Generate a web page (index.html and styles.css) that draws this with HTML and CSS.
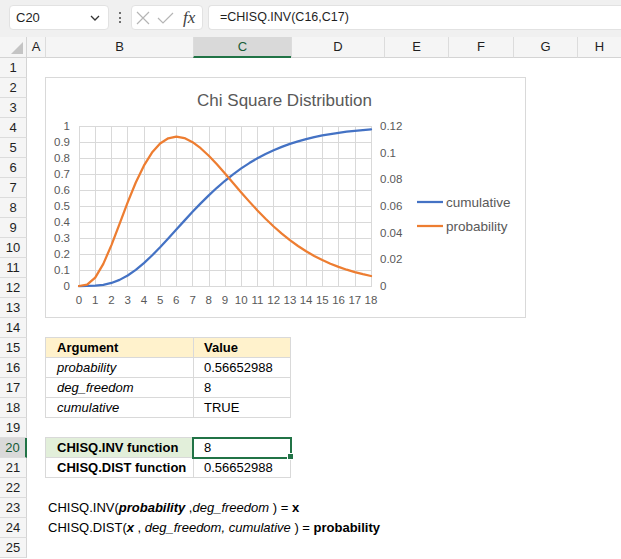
FILE: index.html
```html
<!DOCTYPE html>
<html>
<head>
<meta charset="utf-8">
<link rel="stylesheet" href="styles.css">
</head>
<body>
<div class="toolbar">
  <div class="namebox"><span>C20</span>
    <svg class="chev" width="10" height="6" viewBox="0 0 10 6"><polyline points="1,1 5,5 9,1" fill="none" stroke="#333" stroke-width="1.3"/></svg>
  </div>
  <div class="dots"><i></i><i></i><i></i></div>
  <div class="fxbox">
    <svg width="46" height="23" viewBox="0 0 46 23">
      <path d="M5 6 L17 18 M17 6 L5 18" stroke="#b5b5b5" stroke-width="1.2" fill="none"/>
      <polyline points="26,12 31,17 41,7" stroke="#b5b5b5" stroke-width="1.2" fill="none"/>
    </svg>
    <span class="fx">fx</span>
  </div>
  <div class="formula">=CHISQ.INV(C16,C17)</div>
</div>

<div class="sheet">
  <div class="corner"><span class="tri"></span></div>
  <div class="ch">A</div>
  <div class="ch sep">B</div>
  <div class="ch sep sel">C</div>
  <div class="ch sep">D</div>
  <div class="ch sep">E</div>
  <div class="ch sep">F</div>
  <div class="ch sep">G</div>
  <div class="ch sep">H</div>

  <div class="rh">1</div><div class="row"></div>
  <div class="rh">2</div><div class="row"></div>
  <div class="rh">3</div><div class="row"></div>
  <div class="rh">4</div><div class="row"></div>
  <div class="rh">5</div><div class="row"></div>
  <div class="rh">6</div><div class="row"></div>
  <div class="rh">7</div><div class="row"></div>
  <div class="rh">8</div><div class="row"></div>
  <div class="rh">9</div><div class="row"></div>
  <div class="rh">10</div><div class="row"></div>
  <div class="rh">11</div><div class="row"></div>
  <div class="rh">12</div><div class="row"></div>
  <div class="rh">13</div><div class="row"></div>
  <div class="rh">14</div><div class="row"></div>

  <div class="rh">15</div><div class="a"></div>
  <div class="tc b top hdr bold">Argument</div><div class="tc c top hdr bold">Value</div><div class="rest"></div>
  <div class="rh">16</div><div class="a"></div>
  <div class="tc b it">probability</div><div class="tc c">0.56652988</div><div class="rest"></div>
  <div class="rh">17</div><div class="a"></div>
  <div class="tc b it">deg_freedom</div><div class="tc c">8</div><div class="rest"></div>
  <div class="rh">18</div><div class="a"></div>
  <div class="tc b it">cumulative</div><div class="tc c">TRUE</div><div class="rest"></div>
  <div class="rh">19</div><div class="row"></div>

  <div class="rh sel">20</div><div class="a"></div>
  <div class="tc b top green bold">CHISQ.INV function</div><div class="tc c top active">8</div><div class="rest"></div>
  <div class="rh">21</div><div class="a"></div>
  <div class="tc b bold">CHISQ.DIST function</div><div class="tc c">0.56652988</div><div class="rest"></div>
  <div class="rh">22</div><div class="row"></div>

  <div class="rh">23</div><div class="a"></div>
  <div class="txt">CHISQ.INV(<b><i>probability</i></b> ,<i>deg_freedom</i> ) = <b>x</b></div>
  <div class="rh">24</div><div class="a"></div>
  <div class="txt">CHISQ.DIST(<b><i>x</i></b> , <i>deg_freedom, cumulative</i> ) = <b>probability</b></div>
  <div class="rh">25</div><div class="row"></div>

  <div class="chart">
    <svg width="481" height="241" viewBox="0 0 481 241" font-family="Liberation Sans, Arial, sans-serif">
      <rect x="0.5" y="0.5" width="480" height="240" fill="#fff" stroke="#d9d9d9"/>
      <text x="239.5" y="29" text-anchor="middle" font-size="17" fill="#595959">Chi Square Distribution</text>
      <g stroke="#d9d9d9" stroke-width="1" shape-rendering="crispEdges" fill="none">
        <path d="M34 49.5H326M34 65.5H326M34 81.5H326M34 97.5H326M34 113.5H326M34 129.5H326M34 145.5H326M34 161.5H326M34 177.5H326M34 193.5H326M34 209.5H326"/>
        <path d="M34.5 49V210M50.5 49V210M66.5 49V210M82.5 49V210M99.5 49V210M115.5 49V210M131.5 49V210M147.5 49V210M164.5 49V210M180.5 49V210M196.5 49V210M212.5 49V210M228.5 49V210M245.5 49V210M261.5 49V210M277.5 49V210M293.5 49V210M310.5 49V210M326.5 49V210"/>
      </g>
      <g font-size="11.5" fill="#595959" text-anchor="end">
        <text x="25" y="53">1</text>
        <text x="25" y="69">0.9</text>
        <text x="25" y="85">0.8</text>
        <text x="25" y="101">0.7</text>
        <text x="25" y="117">0.6</text>
        <text x="25" y="133">0.5</text>
        <text x="25" y="149">0.4</text>
        <text x="25" y="165">0.3</text>
        <text x="25" y="181">0.2</text>
        <text x="25" y="197">0.1</text>
        <text x="25" y="213">0</text>
      </g>
      <g font-size="11.5" fill="#595959">
        <text x="335" y="53">0.12</text>
        <text x="335" y="79.7">0.1</text>
        <text x="335" y="106.3">0.08</text>
        <text x="335" y="133">0.06</text>
        <text x="335" y="159.7">0.04</text>
        <text x="335" y="186.3">0.02</text>
        <text x="335" y="213">0</text>
      </g>
      <g font-size="11.5" fill="#595959" text-anchor="middle">
        <text x="34" y="227">0</text>
        <text x="50.2" y="227">1</text>
        <text x="66.4" y="227">2</text>
        <text x="82.7" y="227">3</text>
        <text x="98.9" y="227">4</text>
        <text x="115.1" y="227">5</text>
        <text x="131.3" y="227">6</text>
        <text x="147.6" y="227">7</text>
        <text x="163.8" y="227">8</text>
        <text x="180" y="227">9</text>
        <text x="196.2" y="227">10</text>
        <text x="212.4" y="227">11</text>
        <text x="228.7" y="227">12</text>
        <text x="244.9" y="227">13</text>
        <text x="261.1" y="227">14</text>
        <text x="277.3" y="227">15</text>
        <text x="293.6" y="227">16</text>
        <text x="309.8" y="227">17</text>
        <text x="326" y="227">18</text>
      </g>
      <polyline fill="none" stroke="#4472c4" stroke-width="2.25" stroke-linejoin="round" stroke-linecap="round" points="34,209 42.11,208.98 50.22,208.72 58.33,207.84 66.44,205.96 74.56,202.88 82.67,198.5 90.78,192.87 98.89,186.14 107,178.51 115.11,170.21 123.22,161.49 131.33,152.56 139.44,143.62 147.56,134.86 155.67,126.4 163.78,118.36 171.89,110.79 180,103.77 188.11,97.3 196.22,91.4 204.33,86.07 212.44,81.27 220.56,76.99 228.67,73.19 236.78,69.84 244.89,66.9 253,64.32 261.11,62.08 269.22,60.14 277.33,58.46 285.44,57.02 293.56,55.78 301.67,54.72 309.78,53.82 317.89,53.05 326,52.4"/>
      <polyline fill="none" stroke="#ed7d31" stroke-width="2.25" stroke-linejoin="round" stroke-linecap="round" points="34,209 42.11,207.65 50.22,200.58 58.33,186.86 66.44,168.12 74.56,146.82 82.67,125.33 90.78,105.52 98.89,88.7 107,75.61 115.11,66.49 123.22,61.28 131.33,59.65 139.44,61.11 147.56,65.14 155.67,71.2 163.78,78.75 171.89,87.33 180,96.52 188.11,105.98 196.22,115.42 204.33,124.63 212.44,133.45 220.56,141.77 228.67,149.51 236.78,156.63 244.89,163.13 253,168.99 261.11,174.25 269.22,178.93 277.33,183.07 285.44,186.72 293.56,189.92 301.67,192.7 309.78,195.12 317.89,197.21 326,199"/>
      <line x1="372" y1="125" x2="398" y2="125" stroke="#4472c4" stroke-width="2.25"/>
      <line x1="372" y1="149" x2="398" y2="149" stroke="#ed7d31" stroke-width="2.25"/>
      <text x="401" y="129.5" font-size="13.5" fill="#595959">cumulative</text>
      <text x="401" y="153.5" font-size="13.5" fill="#595959">probability</text>
    </svg>
  </div>
</div>
</body>
</html>
```

FILE: styles.css
```css
html, body {
  margin: 0;
  padding: 0;
}
body {
  width: 621px;
  height: 559px;
  overflow: hidden;
  background: #ffffff;
  font-family: "Liberation Sans", Arial, sans-serif;
  color: #000;
}

/* formula bar */
.toolbar {
  display: flex;
  align-items: flex-start;
  height: 37px;
  box-sizing: border-box;
  padding: 5px 0 0 9px;
  background: #f0f0f0;
}
.namebox {
  width: 100px;
  height: 25px;
  box-sizing: border-box;
  background: #fff;
  border: 1px solid #e2e2e2;
  border-radius: 4px;
  display: flex;
  align-items: center;
  justify-content: space-between;
  padding: 0 8px 0 6px;
  font-size: 13px;
  color: #1f1f1f;
}
.chev { display: block; }
.dots {
  width: 22px;
  height: 25px;
  display: flex;
  flex-direction: column;
  align-items: center;
  justify-content: center;
  gap: 2.5px;
}
.dots i {
  display: block;
  width: 2px;
  height: 2px;
  background: #444;
  border-radius: 50%;
}
.fxbox {
  width: 72px;
  height: 25px;
  box-sizing: border-box;
  background: #fff;
  border: 1px solid #e2e2e2;
  border-radius: 4px;
  display: flex;
  align-items: center;
}
.fxbox svg { display: block; }
.fx {
  margin-left: 5px;
  font-family: "Liberation Serif", "Times New Roman", serif;
  font-style: italic;
  font-size: 17px;
  color: #404040;
  line-height: 23px;
}
.formula {
  margin-left: 5px;
  flex: 1;
  height: 25px;
  box-sizing: border-box;
  background: #fff;
  border: 1px solid #e2e2e2;
  border-right: none;
  border-radius: 4px 0 0 4px;
  padding-left: 11px;
  font-size: 12.5px;
  line-height: 23px;
  color: #1f1f1f;
}

/* sheet */
.sheet {
  position: relative;
  display: grid;
  grid-template-columns: 27px 18px 148px 98px 93px 64px 65px 64px 44px;
  grid-template-rows: 21px repeat(25, 20px);
  font-size: 13px;
}
.corner {
  background: #f5f5f5;
  border-right: 1px solid #d4d4d4;
  border-bottom: 1px solid #d4d4d4;
  box-sizing: border-box;
  display: flex;
  align-items: flex-end;
  justify-content: flex-end;
  padding: 0 3px 3px 0;
}
.tri {
  width: 12px;
  height: 12px;
  background: #c4c4c4;
  clip-path: polygon(100% 0, 100% 100%, 0 100%);
}
.ch {
  background: #f5f5f5;
  border-bottom: 1px solid #d4d4d4;
  box-sizing: border-box;
  text-align: center;
  line-height: 20px;
  color: #1f1f1f;
}
.ch.sep { border-left: 1px solid #dcdcdc; }
.ch.sel {
  background: #d9d9d9;
  border-bottom: 2px solid #217346;
  color: #185c37;
}
.rh {
  grid-column: 1;
  background: #f5f5f5;
  border-right: 1px solid #d4d4d4;
  border-bottom: 1px solid #dcdcdc;
  box-sizing: border-box;
  text-align: center;
  line-height: 19px;
  color: #1f1f1f;
}
.rh.sel {
  background: #d9d9d9;
  border-right: 2px solid #217346;
  color: #185c37;
}
.row { grid-column: 2 / -1; }
.a { grid-column: 2; }
.rest { grid-column: 5 / -1; }

.tc {
  box-sizing: border-box;
  border-left: 1px solid #d9d9d9;
  border-bottom: 1px solid #d9d9d9;
  line-height: 19px;
  white-space: nowrap;
  overflow: visible;
}
.tc.b { grid-column: 3; padding-left: 11px; }
.tc.c { grid-column: 4; padding-left: 10px; border-right: 1px solid #d9d9d9; }
.tc.top { box-shadow: 0 -1px 0 #d9d9d9; }
.hdr { background: #fff2cc; }
.green { background: #e2efda; }
.bold { font-weight: bold; }
.it { font-style: italic; }
.active {
  position: relative;
  outline: 2px solid #217346;
  outline-offset: -1px;
  box-shadow: none;
}
.active::after {
  content: "";
  position: absolute;
  right: -4px;
  bottom: -3px;
  width: 5px;
  height: 5px;
  background: #217346;
  border: 1px solid #fff;
}
.txt {
  grid-column: 3 / -1;
  padding-left: 3px;
  line-height: 20px;
  white-space: nowrap;
}

.chart {
  position: absolute;
  left: 45px;
  top: 40px;
  width: 481px;
  height: 241px;
}
.chart svg { display: block; }
```
